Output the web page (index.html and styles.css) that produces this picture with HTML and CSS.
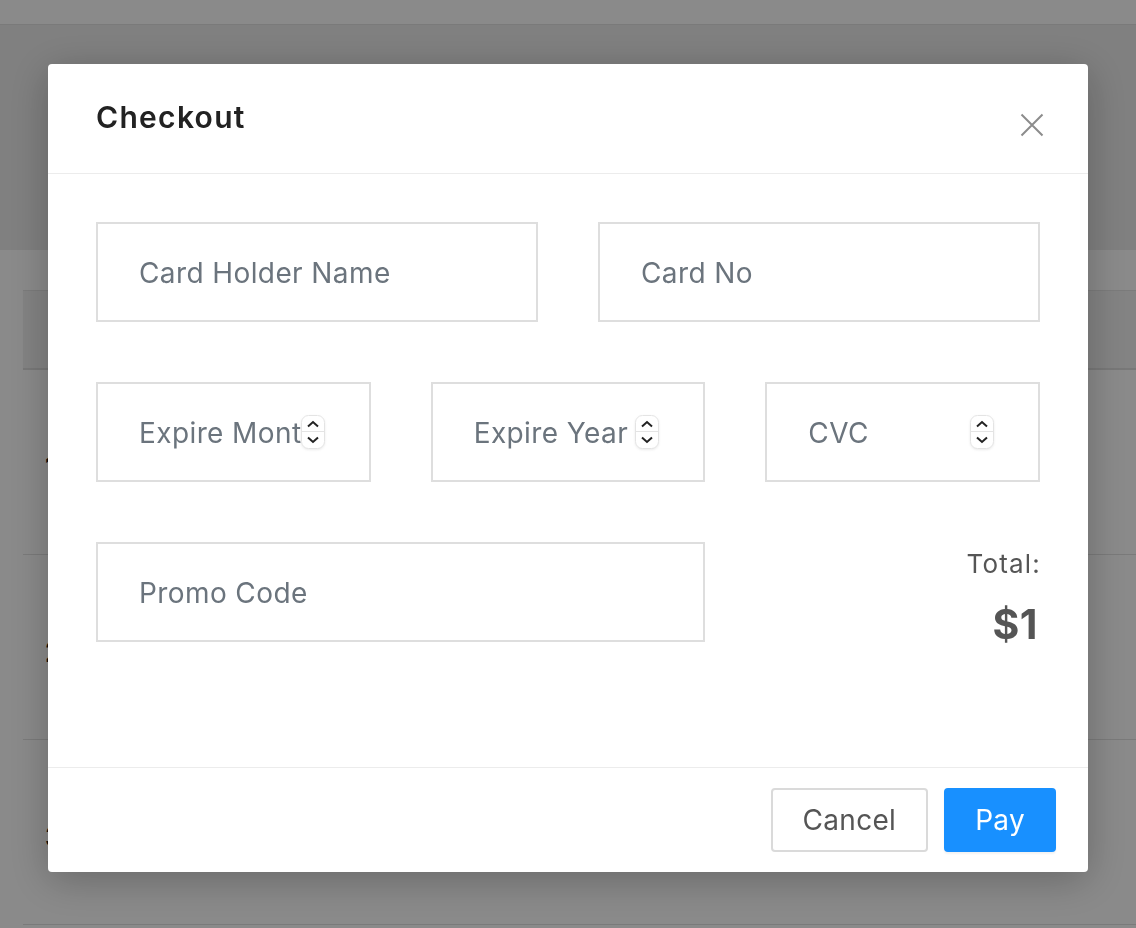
FILE: index.html
```html
<!DOCTYPE html>
<html lang="en">
<head>
<meta charset="utf-8">
<title>Checkout</title>
<link rel="stylesheet" href="styles.css">
</head>
<body>
<div class="page">
  <div class="topbar"></div>
  <div class="hero"></div>
  <div class="table">
    <div class="thead"></div>
    <div class="trow">1</div>
    <div class="trow">2</div>
    <div class="trow">3</div>
  </div>
</div>

<div class="overlay">
  <div class="modal">
    <div class="modal-header">
      <h2 class="modal-title">Checkout</h2>
      <button class="close" aria-label="Close">
        <svg width="24" height="24" viewBox="0 0 24 24"><path d="M1.5 1.5 L22.5 22.5 M22.5 1.5 L1.5 22.5" stroke="#8c8c8c" stroke-width="2" fill="none"/></svg>
      </button>
    </div>
    <div class="modal-body">
      <div class="field span3"><input class="inp" type="text" placeholder="Card Holder Name"></div>
      <div class="field span3"><input class="inp" type="text" placeholder="Card No"></div>
      <div class="field span2 num"><input class="inp" type="text" placeholder="Expire Month"><span class="spin"><svg width="24" height="34" viewBox="0 0 24 34"><rect x="0.5" y="0.5" width="23" height="33" rx="7" fill="#fff" stroke="#e4e4e4"/><line x1="1" y1="16.5" x2="23" y2="16.5" stroke="#e4e4e4"/><path d="M7 11.5 L12 7 L17 11.5" stroke="#222" stroke-width="2" fill="none"/><path d="M7 22.5 L12 27 L17 22.5" stroke="#222" stroke-width="2" fill="none"/></svg></span></div>
      <div class="field span2 num"><input class="inp" type="text" placeholder="Expire Year"><span class="spin"><svg width="24" height="34" viewBox="0 0 24 34"><rect x="0.5" y="0.5" width="23" height="33" rx="7" fill="#fff" stroke="#e4e4e4"/><line x1="1" y1="16.5" x2="23" y2="16.5" stroke="#e4e4e4"/><path d="M7 11.5 L12 7 L17 11.5" stroke="#222" stroke-width="2" fill="none"/><path d="M7 22.5 L12 27 L17 22.5" stroke="#222" stroke-width="2" fill="none"/></svg></span></div>
      <div class="field span2 num"><input class="inp" type="text" placeholder="CVC"><span class="spin"><svg width="24" height="34" viewBox="0 0 24 34"><rect x="0.5" y="0.5" width="23" height="33" rx="7" fill="#fff" stroke="#e4e4e4"/><line x1="1" y1="16.5" x2="23" y2="16.5" stroke="#e4e4e4"/><path d="M7 11.5 L12 7 L17 11.5" stroke="#222" stroke-width="2" fill="none"/><path d="M7 22.5 L12 27 L17 22.5" stroke="#222" stroke-width="2" fill="none"/></svg></span></div>
      <div class="field span4"><input class="inp" type="text" placeholder="Promo Code"></div>
      <div class="total span2">
        <div class="total-label">Total:</div>
        <div class="total-value">$1</div>
      </div>
    </div>
    <div class="modal-footer">
      <button class="btn btn-cancel">Cancel</button>
      <button class="btn btn-pay">Pay</button>
    </div>
  </div>
</div>
</body>
</html>
```

FILE: styles.css
```css
* { box-sizing: border-box; }
html, body { margin: 0; padding: 0; }
body {
  background: #ffffff;
  font-family: "Inter", "Open Sans", sans-serif;
  width: 1136px;
  height: 928px;
  overflow: hidden;
}

/* background page */
.page { width: 1136px; }
.topbar { height: 25px; border-bottom: 1px solid #e2e2e2; background: #fff; }
.hero { height: 225px; background: #ececec; }
.table { margin: 40px 0 0 23px; border-top: 1px solid #e4e4e4; }
.thead { height: 79px; background: #f2f2f2; border-bottom: 2px solid #dedede; }
.trow {
  height: 185px;
  border-bottom: 1px solid #e2e2e2;
  padding: 80px 0 0 22px;
  font-size: 28px;
  font-weight: 700;
  color: #111;
}

/* overlay + modal */
.overlay {
  position: fixed;
  inset: 0;
  background: rgba(0, 0, 0, 0.46);
  padding: 64px 48px 0;
}
.modal {
  width: 1040px;
  height: 808px;
  background: #fff;
  border-radius: 4px;
  box-shadow: 0 8px 40px rgba(0, 0, 0, 0.25);
  display: flex;
  flex-direction: column;
}
.modal-header {
  height: 110px;
  border-bottom: 1px solid #ececec;
  padding: 35px 44px 0 48px;
  display: flex;
  justify-content: space-between;
  align-items: flex-start;
}
.modal-title {
  margin: 0;
  font-size: 30px;
  line-height: 36px;
  font-weight: 600;
  color: #222;
  letter-spacing: 1.3px;
}
.close {
  margin-top: 14px;
  width: 24px;
  height: 24px;
  padding: 0;
  border: 0;
  background: none;
  display: block;
}
.close svg { display: block; }

.modal-body {
  flex: 1;
  padding: 48px 48px 0;
  display: grid;
  grid-template-columns: repeat(6, 1fr);
  grid-auto-rows: 100px;
  column-gap: 60px;
  row-gap: 60px;
  align-content: start;
}
.span2 { grid-column: span 2; }
.span3 { grid-column: span 3; }
.span4 { grid-column: span 4; }

.field {
  border: 2px solid #dedede;
  display: flex;
  align-items: center;
  padding: 0 44px 0 41px;
}
.inp {
  flex: 1;
  min-width: 0;
  border: 0;
  outline: none;
  padding: 0;
  background: transparent;
  font-family: inherit;
  font-size: 28px;
  color: #333;
  letter-spacing: 0.4px;
  position: relative;
  top: 1px;
}
.inp::placeholder { color: #6b747d; opacity: 1; }
.spin { width: 24px; height: 34px; flex: none; display: block; }
.spin svg { display: block; filter: drop-shadow(0 1px 1px rgba(0,0,0,0.08)); }

.total {
  text-align: right;
  padding-top: 6px;
  color: #555;
}
.total-label { font-size: 26px; line-height: 32px; letter-spacing: 1.2px; margin-right: -1px; }
.total-value { font-size: 41px; line-height: 48px; font-weight: 700; margin-top: 20px; letter-spacing: 0.5px; margin-right: 2px; }

.modal-footer {
  border-top: 1px solid #ececec;
  padding: 20px 32px;
  display: flex;
  justify-content: flex-end;
  gap: 16px;
}
.btn {
  height: 64px;
  padding: 0 30px;
  border-radius: 4px;
  font-family: inherit;
  font-size: 28px;
  letter-spacing: 0.3px;
  cursor: pointer;
}
.btn-cancel {
  background: #fff;
  border: 2px solid #dadada;
  color: #555;
}
.btn-pay {
  padding: 0 29px;
  background: #1890ff;
  border: 2px solid #1890ff;
  color: #fff;
  box-shadow: 0 2px 2px rgba(0,0,0,0.05);
}
```
